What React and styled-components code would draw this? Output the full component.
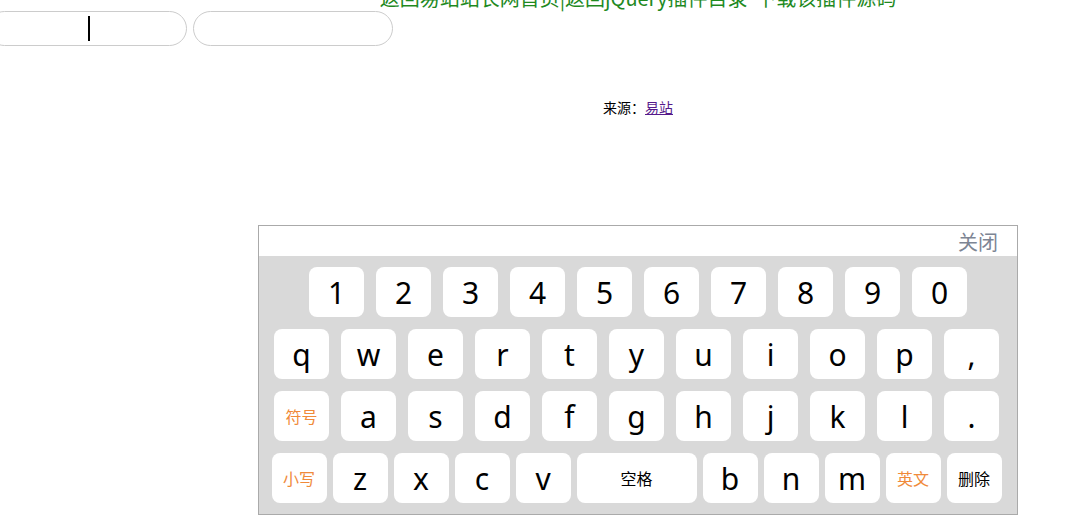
import React from 'react';
import styled, { createGlobalStyle } from 'styled-components';

const GlobalStyle = createGlobalStyle`
  body {
    margin: 0;
    overflow: hidden;
    background: #ffffff;
    font-family: "Noto Sans", "Noto Sans CJK SC", sans-serif;
  }
`;

const Page = styled.div`
  width: 1276px;
`;

const TopLinks = styled.div`
  margin-top: -15px;
  height: 26px;
  line-height: 26px;
  text-align: center;
  font-size: 20px;
  color: #1f8a1f;
  font-family: "Noto Sans CJK SC", sans-serif;
  white-space: pre;
`;

const InputRow = styled.div`
  display: flex;
  gap: 6px;
  margin-left: -13px;
`;

const Field = styled.div`
  box-sizing: border-box;
  width: 200px;
  height: 35px;
  border: 1px solid #cccccc;
  border-radius: 18px;
  display: flex;
  align-items: center;
  padding-left: 100px;
`;

const Caret = styled.span`
  width: 2px;
  height: 25px;
  background: #000000;
`;

const Source = styled.div`
  margin-top: 51px;
  text-align: center;
  font-size: 14px;
  line-height: 20px;
  color: #000000;
  font-family: "Noto Sans CJK SC", sans-serif;

  a {
    color: #551a8b;
    text-decoration: underline;
  }
`;

const Keyboard = styled.div`
  box-sizing: border-box;
  width: 760px;
  margin: 108px 0 0 258px;
  border: 1px solid #aaaaaa;
`;

const Header = styled.div`
  height: 30px;
  display: flex;
  align-items: center;
  justify-content: flex-end;
  padding-right: 19px;
  background: #ffffff;
`;

const Close = styled.span`
  font-family: "Noto Sans CJK SC", sans-serif;
  font-size: 20px;
  color: #7d8594;
`;

const Board = styled.div`
  background: #d9d9d9;
  padding: 11px 0;
  display: flex;
  flex-direction: column;
  gap: 12px;
`;

const Row = styled.div`
  display: flex;
  justify-content: center;
  gap: ${(p) => (p.$tight ? '6px' : '12px')};
  padding-right: ${(p) => (p.$numbers ? '0' : '3px')};
`;

const Key = styled.div`
  width: ${(p) => (p.$wide ? '120px' : '55px')};
  height: 50px;
  background: #ffffff;
  border-radius: 8px;
  display: flex;
  align-items: center;
  justify-content: center;
  font-size: ${(p) => (p.$label ? '16px' : '30px')};
  font-family: ${(p) => (p.$label ? '"Noto Sans CJK SC", sans-serif' : '"Noto Sans", sans-serif')};
  color: ${(p) => (p.$orange ? '#f08a3a' : '#000000')};
`;

const numbers = ['1', '2', '3', '4', '5', '6', '7', '8', '9', '0'];
const row2 = ['q', 'w', 'e', 'r', 't', 'y', 'u', 'i', 'o', 'p', ','];
const row3 = ['a', 's', 'd', 'f', 'g', 'h', 'j', 'k', 'l', '.'];

export default function App() {
  return (
    <Page>
      <GlobalStyle />
      <TopLinks>返回易站站长网首页|返回jQuery插件目录  下载该插件源码</TopLinks>
      <InputRow>
        <Field>
          <Caret />
        </Field>
        <Field />
      </InputRow>
      <Source>
        来源：<a href="#">易站</a>
      </Source>
      <Keyboard>
        <Header>
          <Close>关闭</Close>
        </Header>
        <Board>
          <Row $numbers>
            {numbers.map((k) => (
              <Key key={k}>{k}</Key>
            ))}
          </Row>
          <Row>
            {row2.map((k) => (
              <Key key={k}>{k}</Key>
            ))}
          </Row>
          <Row>
            <Key $label $orange>符号</Key>
            {row3.map((k) => (
              <Key key={k}>{k}</Key>
            ))}
          </Row>
          <Row $tight>
            <Key $label $orange>小写</Key>
            {['z', 'x', 'c', 'v'].map((k) => (
              <Key key={k}>{k}</Key>
            ))}
            <Key $label $wide>空格</Key>
            {['b', 'n', 'm'].map((k) => (
              <Key key={k}>{k}</Key>
            ))}
            <Key $label $orange>英文</Key>
            <Key $label>删除</Key>
          </Row>
        </Board>
      </Keyboard>
    </Page>
  );
}
